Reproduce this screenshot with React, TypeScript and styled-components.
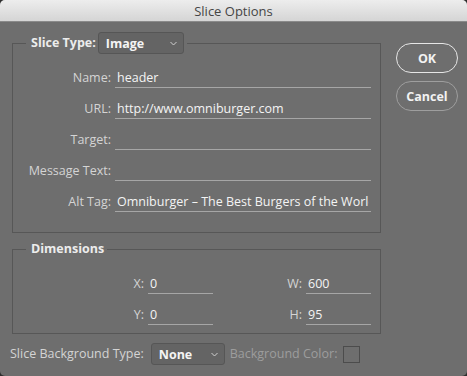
import React from "react";
import styled, { createGlobalStyle } from "styled-components";

const FONT = `"Open Sans", "Liberation Sans", Arial, sans-serif`;

const Global = createGlobalStyle`
  html, body { margin: 0; padding: 0; background: #2e2e2e; }
  body { font-family: ${FONT}; font-size: 12.5px; }
  * { box-sizing: border-box; }
`;

const Window = styled.div`
  width: 467px;
  height: 376px;
  background: #6e6e6e;
  border-radius: 5px;
  overflow: hidden;
  display: flex;
  flex-direction: column;
`;

const TitleBar = styled.div`
  height: 22px;
  flex: none;
  background: linear-gradient(#ededed, #d5d5d5);
  border-bottom: 1px solid #8a8a8a;
  display: flex;
  align-items: center;
  justify-content: center;
  color: #454545;
  font-size: 13px;
`;

const Body = styled.div`
  flex: 1;
  display: flex;
  flex-direction: column;
  padding: 10px 0 0 12px;
`;

const Main = styled.div`
  display: flex;
  gap: 15px;
`;

const LeftCol = styled.div`
  width: 369px;
  display: flex;
  flex-direction: column;
`;

const Group = styled.fieldset<{ $pt: number; $pb: number; $mt?: number }>`
  margin: ${(p) => p.$mt ?? 0}px 0 0 0;
  padding: ${(p) => p.$pt}px 9px ${(p) => p.$pb}px 0;
  border: 1px solid #575757;
  min-width: 0;
`;

const Legend = styled.legend`
  margin-left: 13px;
  padding: 0 3px 0 5px;
  display: flex;
  align-items: center;
  gap: 2px;
  color: #ececec;
  font-weight: bold;
  line-height: 16px;
`;

const Select = styled.div<{ $w: number }>`
  width: ${(p) => p.$w}px;
  height: 22px;
  background: #646464;
  border: 1px solid #565656;
  border-radius: 3px;
  display: flex;
  align-items: center;
  justify-content: space-between;
  padding: 1px 6px 0 7px;
  color: #f4f4f4;
  font-weight: bold;
  font-size: 12.5px;
`;

const Chevron = () => (
  <svg width="7" height="5" viewBox="0 0 7 5" fill="none">
    <path d="M0.5 1 L3.5 4 L6.5 1" stroke="#cfcfcf" strokeWidth="1" />
  </svg>
);

const FormGrid = styled.div`
  display: grid;
  grid-template-columns: 98px 256px;
  column-gap: 4px;
  row-gap: 11px;
  align-items: center;
`;

const Label = styled.label<{ $dim?: boolean }>`
  text-align: right;
  color: ${(p) => (p.$dim ? "#9d9d9d" : "#d4d4d4")};
  white-space: nowrap;
  line-height: 20px;
`;

const Field = styled.input`
  width: 100%;
  height: 20px;
  padding: 0 2px;
  margin: 0;
  border: none;
  border-bottom: 1px solid #a6a6a6;
  background: transparent;
  color: #f4f4f4;
  font-family: ${FONT};
  font-size: 12.5px;
  line-height: 19px;
  outline: none;
  text-overflow: clip;
`;

const DimGrid = styled.div`
  display: grid;
  grid-template-columns: 135px 65px 93px 65px;
  row-gap: 11px;
  align-items: center;
`;

const DimLabel = styled(Label)`
  padding-right: 4px;
`;

const RightCol = styled.div`
  display: flex;
  flex-direction: column;
  gap: 8px;
  padding-top: 11px;
`;

const Button = styled.button<{ $primary?: boolean }>`
  width: 62px;
  height: 30px;
  border-radius: 15px;
  background: transparent;
  border: 1px solid ${(p) => (p.$primary ? "#e6e6e6" : "#9e9e9e")};
  color: #f2f2f2;
  font-family: ${FONT};
  font-weight: bold;
  font-size: 12.5px;
  padding: 0;
`;

const BottomRow = styled.div`
  display: flex;
  align-items: center;
  margin-top: 9px;
  margin-left: -2px;
  height: 22px;
`;

const Swatch = styled.div`
  width: 17px;
  height: 17px;
  border: 1px solid #4c4c4c;
  margin-left: 6px;
`;

export default function App() {
  return (
    <>
      <Global />
      <Window>
        <TitleBar>Slice Options</TitleBar>
        <Body>
          <Main>
            <LeftCol>
              <Group $pt={14} $pb={20}>
                <Legend>
                  Slice Type:
                  <Select $w={86}>
                    Image
                    <Chevron />
                  </Select>
                </Legend>
                <FormGrid>
                  <Label>Name:</Label>
                  <Field defaultValue="header" readOnly />
                  <Label>URL:</Label>
                  <Field defaultValue="http://www.omniburger.com" readOnly />
                  <Label>Target:</Label>
                  <Field defaultValue="" readOnly />
                  <Label>Message Text:</Label>
                  <Field defaultValue="" readOnly />
                  <Label>Alt Tag:</Label>
                  <Field
                    defaultValue="Omniburger – The Best Burgers of the World"
                    readOnly
                  />
                </FormGrid>
              </Group>
              <Group $pt={17} $pb={8} $mt={8}>
                <Legend>Dimensions</Legend>
                <DimGrid>
                  <DimLabel>X:</DimLabel>
                  <Field defaultValue="0" readOnly />
                  <DimLabel>W:</DimLabel>
                  <Field defaultValue="600" readOnly />
                  <DimLabel>Y:</DimLabel>
                  <Field defaultValue="0" readOnly />
                  <DimLabel>H:</DimLabel>
                  <Field defaultValue="95" readOnly />
                </DimGrid>
              </Group>
            </LeftCol>
            <RightCol>
              <Button $primary>OK</Button>
              <Button>Cancel</Button>
            </RightCol>
          </Main>
          <BottomRow>
            <Label>Slice Background Type:</Label>
            <Select $w={74} style={{ marginLeft: 7, marginRight: 5 }}>
              None
              <Chevron />
            </Select>
            <Label $dim>Background Color:</Label>
            <Swatch />
          </BottomRow>
        </Body>
      </Window>
    </>
  );
}
